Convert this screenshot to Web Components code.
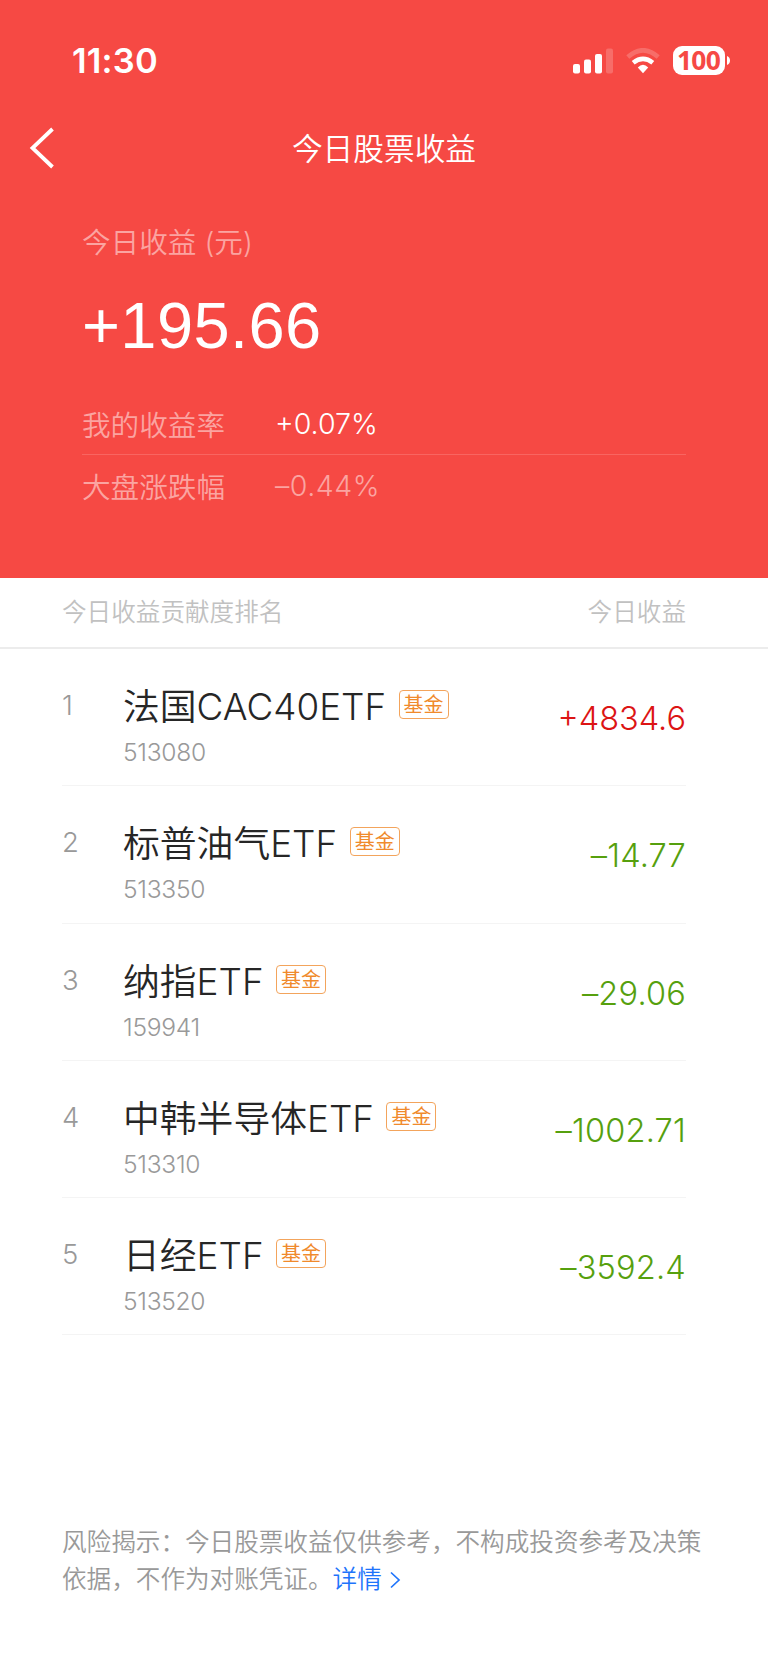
<!DOCTYPE html>
<html lang="zh-CN">
<head>
<meta charset="utf-8">
<meta name="viewport" content="width=device-width">
<title>今日股票收益</title>
<style>
  body {
    margin: 0;
    background: #fff;
    font-family: Inter, "Noto Sans CJK SC", sans-serif;
    font-weight: 350;
  }
</style>
</head>
<body>
<profit-page></profit-page>

<script>
const define = (name, html, setup)=> {
  const template = document.createElement('template');

  template.innerHTML = html;

  customElements.define(name, class extends HTMLElement {
    constructor() {
      super();
      this.attachShadow({ mode: 'open' }).append(template.content.cloneNode(true));
    }

    connectedCallback() {
      setup?.(this, this.shadowRoot);
    }
  });
};

define('status-bar', `
  <style>
    :host {
      display: flex;
      align-items: center;
      justify-content: space-between;
      box-sizing: border-box;
      height: 102px;
      padding: 19px 38px 0 72px;
      color: #fff;
    }

    time {
      padding-top: 1px;
      font-size: 34.5px;
      font-weight: 600;
      line-height: 40px;
      letter-spacing: 0.2px;
    }

    .icons {
      display: flex;
      align-items: center;
    }

    .wifi {
      margin-left: 13px;
    }

    .battery {
      display: flex;
      align-items: center;
      margin-left: 13px;
    }

    .level {
      width: 52px;
      height: 29px;
      border-radius: 9px;
      background: #fff;
      color: #f64944;
      font: 700 26.4px/28px "Noto Sans", sans-serif;
      letter-spacing: -0.8px;
      text-align: center;
      text-indent: -1px;
    }

    svg {
      display: block;
    }
  </style>
  <time>11:30</time>
  <div class="icons">
    <svg width="40" height="26" viewBox="0 0 40 26" fill="#fff">
      <rect x="0" y="16" width="7" height="9.5" rx="2"/>
      <rect x="11" y="11.5" width="7" height="14" rx="2"/>
      <rect x="22" y="6" width="7" height="19.5" rx="2"/>
      <rect x="33" y="0.5" width="7" height="25" rx="2" opacity=".2"/>
    </svg>
    <svg class="wifi" width="34" height="26" viewBox="0 0 34 26" fill="none" stroke="#fff" stroke-width="4.6">
      <path d="M1.8 9Q17-4.4 32.2 9" opacity=".2"/>
      <path d="M7.2 14.8Q17 7 26.8 14.8"/>
      <path d="M11.8 19.4Q17 14.2 22.2 19.4L17 25.2Z" fill="#fff" stroke="none"/>
    </svg>
    <div class="battery">
      <div class="level">100</div>
      <svg width="5" height="9" viewBox="0 0 5 9"><path d="M2 0Q5 1.4 5 4.5Q5 7.6 2 9Z" fill="#fff"/></svg>
    </div>
  </div>
`);

define('nav-bar', `
  <style>
    :host {
      display: grid;
      grid-template-columns: 60px 1fr 60px;
      align-items: center;
      height: 92px;
      color: #fff;
      font-size: 30.7px;
      line-height: 44px;
      text-align: center;
    }

    svg {
      display: block;
      margin-left: 28px;
    }

    .title {
      padding-top: 2px;
    }
  </style>
  <svg width="28" height="42" viewBox="0 0 28 42" fill="none" stroke="#fff" stroke-width="3.8">
    <path d="M24.5 2L4.5 21L24.5 40"/>
  </svg>
  <div class="title"><slot></slot></div>
`);

define('profit-summary', `
  <style>
    :host {
      display: block;
      padding: 29px 82px 0;
      color: #fff;
      font-size: 28.6px;
    }

    .label {
      line-height: 40px;
      color: #fba4a1;
    }

    .total {
      height: 76px;
      margin: 25px 0 30px;
      font: 400 65px/76px "Liberation Sans", sans-serif;
      letter-spacing: 0.4px;
    }

    .row {
      display: grid;
      grid-template-columns: 193px 1fr;
      align-items: center;
      box-sizing: border-box;
      height: 60px;
      padding-bottom: 2px;
    }

    .row + .row {
      padding: 1px 0 0;
      border-top: 1px solid #f96561;
    }

    .muted {
      color: #fba4a1;
    }

    [name="market"] {
      letter-spacing: 0.5px;
    }
  </style>
  <div class="label"><slot name="label"></slot></div>
  <div class="total"><slot name="total"></slot></div>
  <div class="row"><span class="muted">我的收益率</span><slot name="mine"></slot></div>
  <div class="row muted"><span>大盘涨跌幅</span><slot name="market"></slot></div>
`);

define('rank-header', `
  <style>
    :host {
      display: flex;
      justify-content: space-between;
      height: 71.5px;
      padding: 0 82px 0 62px;
      border-bottom: 2px solid #ececec;
      box-sizing: border-box;
      color: #c1c1c1;
      font-size: 24.6px;
      line-height: 69px;
    }
  </style>
  <span>今日收益贡献度排名</span>
  <span>今日收益</span>
`);

define('fund-row', `
  <style>
    :host {
      display: grid;
      grid-template-columns: 61px 1fr auto;
      height: 137.3px;
      margin: 0 82px 0 62px;
      border-bottom: 1.5px solid #f4f4f4;
      box-sizing: border-box;
    }

    .rank {
      padding-top: 36px;
      color: #999;
      font-size: 27.5px;
      line-height: 40px;
    }

    .title {
      display: flex;
      align-items: center;
      height: 50px;
      margin-top: 30px;
      color: #262626;
      font-size: 36.8px;
      white-space: nowrap;
    }

    .tag {
      height: 27px;
      margin: 1px 0 0 12.5px;
      padding: 0 4px;
      border: 1px solid #f3a45c;
      border-radius: 4px;
      color: #f08a2c;
      font-size: 20px;
      font-weight: 400;
      line-height: 28px;
    }

    .code {
      margin-top: 7px;
      color: #999;
      font-size: 24.6px;
      letter-spacing: -0.3px;
      line-height: 32px;
    }

    .value {
      padding-top: 48px;
      color: #56a00e;
      font-size: 32.5px;
      letter-spacing: 0.2px;
      line-height: 44px;
    }

    :host([up]) .value {
      color: #dc1414;
      letter-spacing: 0;
    }
  </style>
  <div class="rank"></div>
  <div>
    <div class="title"><slot></slot><span class="tag">基金</span></div>
    <div class="code"></div>
  </div>
  <div class="value"></div>
`, (host, shadow)=> {
  for (const name of ['rank', 'code', 'value']) {
    shadow.querySelector(`.${name}`).textContent = host.getAttribute(name);
  }
});

define('risk-note', `
  <style>
    :host {
      display: block;
      margin: 189px 62px 0;
      color: #999;
      font-size: 24.6px;
      line-height: 37px;
      white-space: nowrap;
    }

    a {
      color: #1f74fb;
    }

    svg {
      margin-left: 7px;
      vertical-align: -1px;
    }
  </style>
  <slot></slot><a>详情<svg width="12" height="18" viewBox="0 0 12 18" fill="none" stroke="currentColor" stroke-width="1.7"><path d="M2 1.5L10 9L2 16.5"/></svg></a>
`);

define('profit-page', `
  <style>
    :host {
      display: block;
      min-height: 1663px;
    }

    header {
      height: 577.5px;
      background: #f64944;
    }
  </style>
  <header>
    <status-bar></status-bar>
    <nav-bar>今日股票收益</nav-bar>
    <profit-summary>
      <span slot="label">今日收益 (元)</span>
      <span slot="total">+195.66</span>
      <span slot="mine">+0.07%</span>
      <span slot="market">–0.44%</span>
    </profit-summary>
  </header>
  <rank-header></rank-header>
  <main>
    <fund-row rank="1" code="513080" value="+4834.6" up>法国CAC40ETF</fund-row>
    <fund-row rank="2" code="513350" value="–14.77">标普油气ETF</fund-row>
    <fund-row rank="3" code="159941" value="–29.06">纳指ETF</fund-row>
    <fund-row rank="4" code="513310" value="–1002.71">中韩半导体ETF</fund-row>
    <fund-row rank="5" code="513520" value="–3592.4">日经ETF</fund-row>
  </main>
  <risk-note>风险揭示：今日股票收益仅供参考，不构成投资参考及决策<br>依据，不作为对账凭证。</risk-note>
`);
</script>
</body>
</html>
